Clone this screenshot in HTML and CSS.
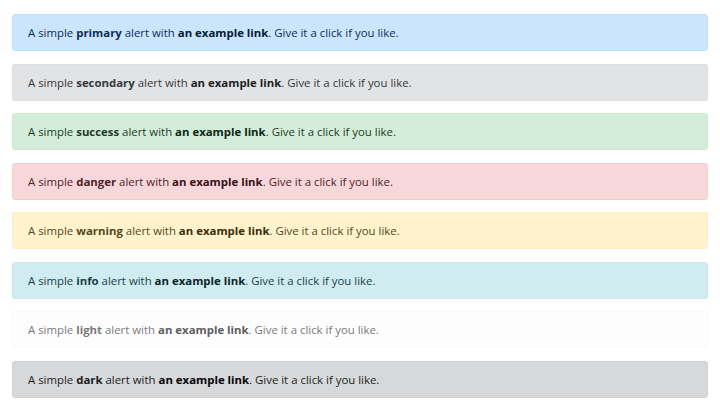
FILE: index.html
```html
<!DOCTYPE html>
<html lang="en">
<head>
  <meta charset="UTF-8" />
  <title>Alerts</title>
  <link rel="stylesheet" href="styles.css">
</head>
<body>
  <div class="container">
    <div class="alert alert-primary">A simple <b>primary</b> alert with <a href="#" class="alert-link">an example link</a>. Give it a click if you like.</div>
    <div class="alert alert-secondary">A simple <b>secondary</b> alert with <a href="#" class="alert-link">an example link</a>. Give it a click if you like.</div>
    <div class="alert alert-success">A simple <b>success</b> alert with <a href="#" class="alert-link">an example link</a>. Give it a click if you like.</div>
    <div class="alert alert-danger">A simple <b>danger</b> alert with <a href="#" class="alert-link">an example link</a>. Give it a click if you like.</div>
    <div class="alert alert-warning">A simple <b>warning</b> alert with <a href="#" class="alert-link">an example link</a>. Give it a click if you like.</div>
    <div class="alert alert-info">A simple <b>info</b> alert with <a href="#" class="alert-link">an example link</a>. Give it a click if you like.</div>
    <div class="alert alert-light">A simple <b>light</b> alert with <a href="#" class="alert-link">an example link</a>. Give it a click if you like.</div>
    <div class="alert alert-dark">A simple <b>dark</b> alert with <a href="#" class="alert-link">an example link</a>. Give it a click if you like.</div>
  </div>
</body>
</html>
```

FILE: styles.css
```css
body {
  margin: 0;
  font-family: "Open Sans", "Noto Sans", sans-serif;
  background-color: #fff;
}

.container {
  padding: 14px 12px;
}

.alert {
  padding: 9px 15px;
  margin-bottom: 12.5px;
  border: 1px solid transparent;
  border-radius: 3px;
  font-size: 11.4px;
  line-height: 17px;
}

.alert b,
.alert-link {
  font-weight: 700;
}

.alert-link {
  text-decoration: none;
}

.alert-primary { color: #0d2d55; background-color: #cce5ff; border-color: #c2dffd; }
.alert-primary .alert-link { color: #061a33; }

.alert-secondary { color: #34383c; background-color: #e2e3e5; border-color: #dcdde0; }
.alert-secondary .alert-link { color: #1c1f22; }

.alert-success { color: #1d3b25; background-color: #d4edda; border-color: #cbe8d2; }
.alert-success .alert-link { color: #0b2612; }

.alert-danger { color: #4f2228; background-color: #f8d7da; border-color: #f6ced2; }
.alert-danger .alert-link { color: #3a1015; }

.alert-warning { color: #55471c; background-color: #fff3cd; border-color: #fdefc0; }
.alert-warning .alert-link { color: #3a2e06; }

.alert-info { color: #1a3f47; background-color: #d1ecf1; border-color: #c8e8ee; }
.alert-info .alert-link { color: #0b252b; }

.alert-light { color: #7a7a7b; background-color: #fdfdfe; border-color: #f9f9fa; }
.alert-light .alert-link { color: #5e5e5e; }

.alert-dark { color: #1b1e21; background-color: #d6d8d9; border-color: #cdcfd1; }
.alert-dark .alert-link { color: #040505; }
```
